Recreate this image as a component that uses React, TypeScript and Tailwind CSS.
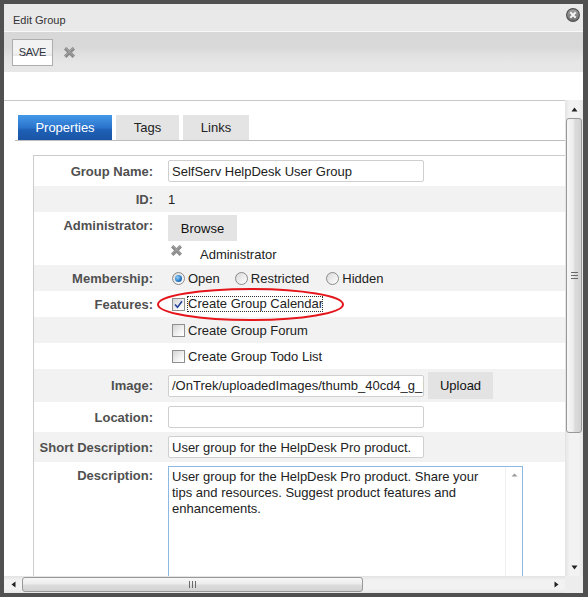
import type { ReactNode } from "react";

// chunky grey X used in the toolbar and next to the administrator
function XMark() {
  return (
    <svg width="13" height="13" viewBox="0 0 13 13" className="shrink-0">
      <path d="M2.2 2.2 L10.8 10.8 M10.8 2.2 L2.2 10.8" stroke="#8a8a8a" strokeWidth="3.4" />
      <path d="M2.4 1.6 L10.6 9.8 M10.6 1.6 L2.4 9.8" stroke="#a9a9a9" strokeWidth="1" />
    </svg>
  );
}

function CloseIcon() {
  return (
    <svg width="14" height="14" viewBox="0 0 14 14" className="mt-[4px] self-start">
      <defs>
        <linearGradient id="cg" x1="0" y1="0" x2="0" y2="1">
          <stop offset="0" stopColor="#a3a3a3" />
          <stop offset="1" stopColor="#6c6c6c" />
        </linearGradient>
      </defs>
      <circle cx="7" cy="7" r="6.4" fill="url(#cg)" stroke="#4f4f4f" strokeWidth="1.1" />
      <path d="M4.3 4.3 L9.7 9.7 M9.7 4.3 L4.3 9.7" stroke="#f4f4f4" strokeWidth="2" />
    </svg>
  );
}

function Arrow({ dir }: { dir: "up" | "down" | "left" | "right" }) {
  const d = {
    up: "M0.5 4.5 L3.5 0.5 L6.5 4.5 Z",
    down: "M0.5 0.5 L3.5 4.5 L6.5 0.5 Z",
    left: "M4.5 0.5 L0.5 3.5 L4.5 6.5 Z",
    right: "M0.5 0.5 L4.5 3.5 L0.5 6.5 Z",
  }[dir];
  const vertical = dir === "up" || dir === "down";
  return (
    <svg width={vertical ? 7 : 5} height={vertical ? 5 : 7} viewBox={vertical ? "0 0 7 5" : "0 0 5 7"}>
      <path d={d} fill="#222" />
    </svg>
  );
}

function Radio({ checked }: { checked?: boolean }) {
  return (
    <span className="w-[13px] h-[13px] rounded-full border border-[#8a8a8a] bg-[linear-gradient(135deg,#d9d9d9,#ffffff)] flex items-center justify-center shrink-0">
      {checked && (
        <span className="w-[7px] h-[7px] rounded-full bg-[radial-gradient(circle_at_35%_35%,#8dd0fb,#1766b8_70%,#0c4b8f)]" />
      )}
    </span>
  );
}

function Checkbox({ checked }: { checked?: boolean }) {
  return (
    <span className="w-[13px] h-[13px] border border-[#8e8f8f] bg-[linear-gradient(135deg,#d4d4d4,#f7f7f7_70%,#ffffff)] flex items-center justify-center shrink-0">
      {checked && (
        <svg width="9" height="9" viewBox="0 0 9 9">
          <path d="M1 4.5 L3.5 7.2 L8 1.2" fill="none" stroke="#26439b" strokeWidth="1.6" />
        </svg>
      )}
    </span>
  );
}

function Row({
  label,
  shade,
  className,
  labelClass = "",
  valueClass = "",
  children,
}: {
  label?: string;
  shade?: boolean;
  className: string;
  labelClass?: string;
  valueClass?: string;
  children?: ReactNode;
}) {
  return (
    <div className={`flex ${shade ? "bg-[#f2f2f2]" : "bg-white"} ${className}`}>
      <div className={`w-[127px] shrink-0 pr-[8px] text-right text-[13px] leading-[15px] font-bold text-[#505050] ${labelClass}`}>
        {label}
      </div>
      <div className={`pl-[7px] text-[13px] leading-[15px] text-[#222] ${valueClass}`}>{children}</div>
    </div>
  );
}

function TextInput({ value }: { value?: string }) {
  return (
    <div className="w-[256px] h-[22px] border border-[#cfcfcf] rounded-[2px] bg-white pl-[3px] flex items-center overflow-hidden whitespace-nowrap">
      {value}
    </div>
  );
}

export default function App() {
  return (
    <div className="w-[588px] h-[597px] bg-[#505050] pt-[4px] pl-[4px] pr-[5px] pb-[4px] font-['Liberation_Sans',Arial,sans-serif]">
      <div className="flex flex-col h-full bg-white">
        {/* title bar */}
        <div className="h-[28px] shrink-0 bg-[#e9e9e9] border-b border-[#f8f8f8] flex justify-between pl-[9px] pr-[3px]">
          <span className="text-[11px] text-[#333] pt-[8px]">Edit Group</span>
          <CloseIcon />
        </div>

        {/* toolbar */}
        <div className="h-[40px] shrink-0 bg-[linear-gradient(to_bottom,#d7d7d7,#d9d9d9_40%,#e0e0e0_55%,#e6e6e6_75%,#e7e7e7)] flex items-center pl-[8px] pt-[1px]">
          <button className="w-[41px] h-[27px] border border-[#adadad] bg-[linear-gradient(to_bottom,#f2f2f2,#f2f2f2_50%,#e9e9e9_62%,#ffffff_66%,#ffffff)] text-[11px] tracking-[-0.3px] text-[#2f3440] flex items-center justify-center">
            SAVE
          </button>
          <span className="ml-[10px]">
            <XMark />
          </span>
        </div>

        <div className="h-[28px] shrink-0" />

        {/* scrolling body */}
        <div className="flex-1 min-h-0 grid grid-cols-[1fr_18px] grid-rows-[1fr_17px]">
          <div className="border-t border-[#c9c9c9] overflow-hidden">
            <div className="w-[830px] pt-[14px]">
              {/* tabs */}
              <div className="ml-[11px] pl-[3px] flex gap-[4px] border-b border-[#bdbdbd] text-[13px]">
                <div className="w-[94px] h-[25px] flex items-center justify-center text-white bg-[linear-gradient(to_bottom,#4599e8,#2a74cc_50%,#1e60b6_60%,#1a54a5)]">
                  Properties
                </div>
                <div className="w-[63px] h-[25px] flex items-center justify-center text-[#222] bg-[#e4e4e4]">Tags</div>
                <div className="w-[66px] h-[25px] flex items-center justify-center text-[#222] bg-[#e4e4e4]">Links</div>
              </div>

              {/* form panel */}
              <div className="mt-[14px] ml-[29px] border-l border-t border-[#cccccc]">
                <Row label="Group Name:" className="h-[30px] items-center">
                  <TextInput value="SelfServ HelpDesk User Group" />
                </Row>
                <Row label="ID:" shade className="h-[26px] items-center">
                  1
                </Row>
                <Row label="Administrator:" className="h-[53px] items-start" labelClass="pt-[6px]" valueClass="pt-[3px]">
                  <button className="w-[69px] h-[26px] bg-[#e4e4e4] text-[13px] text-[#111] flex items-center justify-center">
                    Browse
                  </button>
                  <div className="flex items-start">
                    <span className="mt-[3px] ml-[2px]">
                      <XMark />
                    </span>
                    <span className="mt-[6px] ml-[17px]">Administrator</span>
                  </div>
                </Row>
                <Row label="Membership:" shade className="h-[26px] items-center">
                  <div className="flex items-center pl-[4px]">
                    <Radio checked />
                    <span className="ml-[3px] mr-[15px]">Open</span>
                    <Radio />
                    <span className="ml-[3px] mr-[17px]">Restricted</span>
                    <Radio />
                    <span className="ml-[3px]">Hidden</span>
                  </div>
                </Row>
                <div className="relative">
                  <Row label="Features:" className="h-[26px] items-center">
                    <div className="flex items-center pl-[4px]">
                      <Checkbox checked />
                      <span className="ml-[2px] w-[136px] h-[16px] border border-dotted border-[#333] overflow-hidden whitespace-nowrap leading-[14px]">
                        Create Group Calendar
                      </span>
                    </div>
                  </Row>
                  <svg width="189" height="35" viewBox="0 0 189 35" className="absolute left-[122px] top-[-4px] pointer-events-none">
                    <ellipse cx="94.5" cy="17.5" rx="92.5" ry="15.5" fill="none" stroke="#e5161b" strokeWidth="2" />
                  </svg>
                </div>
                <Row shade className="h-[26px] items-center">
                  <div className="flex items-center pl-[4px]">
                    <Checkbox />
                    <span className="ml-[3px]">Create Group Forum</span>
                  </div>
                </Row>
                <Row className="h-[26px] items-center">
                  <div className="flex items-center pl-[4px]">
                    <Checkbox />
                    <span className="ml-[3px]">Create Group Todo List</span>
                  </div>
                </Row>
                <Row label="Image:" shade className="h-[33px] items-center">
                  <div className="flex items-center">
                    <TextInput value="/OnTrek/uploadedImages/thumb_40cd4_g_H" />
                    <button className="ml-[4px] w-[65px] h-[27px] bg-[#e3e3e3] text-[13px] text-[#111] flex items-center justify-center">
                      Upload
                    </button>
                  </div>
                </Row>
                <Row label="Location:" className="h-[30px] items-center">
                  <TextInput />
                </Row>
                <Row label="Short Description:" shade className="h-[30px] items-center">
                  <TextInput value="User group for the HelpDesk Pro product." />
                </Row>
                <Row label="Description:" className="items-start" labelClass="pt-[6px]" valueClass="pt-[4px]">
                  <div className="w-[355px] h-[160px] border border-[#8cb8e4] bg-white flex">
                    <div className="flex-1 pl-[3px] pt-[2px] leading-[16px]">
                      User group for the HelpDesk Pro product. Share your
                      <br />
                      tips and resources. Suggest product features and
                      <br />
                      enhancements.
                    </div>
                    <div className="w-[17px] flex justify-center pt-[6px] border-l border-[#f0f0f0]">
                      <svg width="7" height="4" viewBox="0 0 7 4">
                        <path d="M0.5 3.5 L3.5 0.5 L6.5 3.5 Z" fill="#9a9a9a" />
                      </svg>
                    </div>
                  </div>
                </Row>
              </div>
            </div>
          </div>

          {/* vertical scrollbar */}
          <div className="flex flex-col bg-[linear-gradient(to_right,#e3e3e3,#f2f2f2_25%,#f2f2f2_75%,#e6e6e6)]">
            <div className="h-[18px] flex items-center justify-center">
              <Arrow dir="up" />
            </div>
            <div className="mx-[1px] h-[315px] rounded-[3px] border border-[#989898] bg-[linear-gradient(to_right,#f7f7f7,#ececec_45%,#dcdcdc_55%,#d2d2d2)] flex flex-col items-center justify-center gap-[2px]">
              <span className="w-[7px] h-[1px] bg-[#6a6a6a]" />
              <span className="w-[7px] h-[1px] bg-[#6a6a6a]" />
              <span className="w-[7px] h-[1px] bg-[#6a6a6a]" />
            </div>
            <div className="flex-1" />
            <div className="h-[18px] flex items-center justify-center">
              <Arrow dir="down" />
            </div>
          </div>

          {/* horizontal scrollbar */}
          <div className="flex bg-[linear-gradient(to_bottom,#e3e3e3,#f2f2f2_25%,#f2f2f2_75%,#e6e6e6)]">
            <div className="w-[18px] flex items-center justify-center">
              <Arrow dir="left" />
            </div>
            <div className="my-[1px] w-[341px] rounded-[3px] border border-[#989898] bg-[linear-gradient(to_bottom,#f7f7f7,#ececec_45%,#dcdcdc_55%,#d2d2d2)] flex items-center justify-center gap-[2px]">
              <span className="w-[1px] h-[7px] bg-[#6a6a6a]" />
              <span className="w-[1px] h-[7px] bg-[#6a6a6a]" />
              <span className="w-[1px] h-[7px] bg-[#6a6a6a]" />
            </div>
            <div className="flex-1" />
            <div className="w-[18px] flex items-center justify-center">
              <Arrow dir="right" />
            </div>
          </div>
          <div className="bg-[#ededed]" />
        </div>
      </div>
    </div>
  );
}
